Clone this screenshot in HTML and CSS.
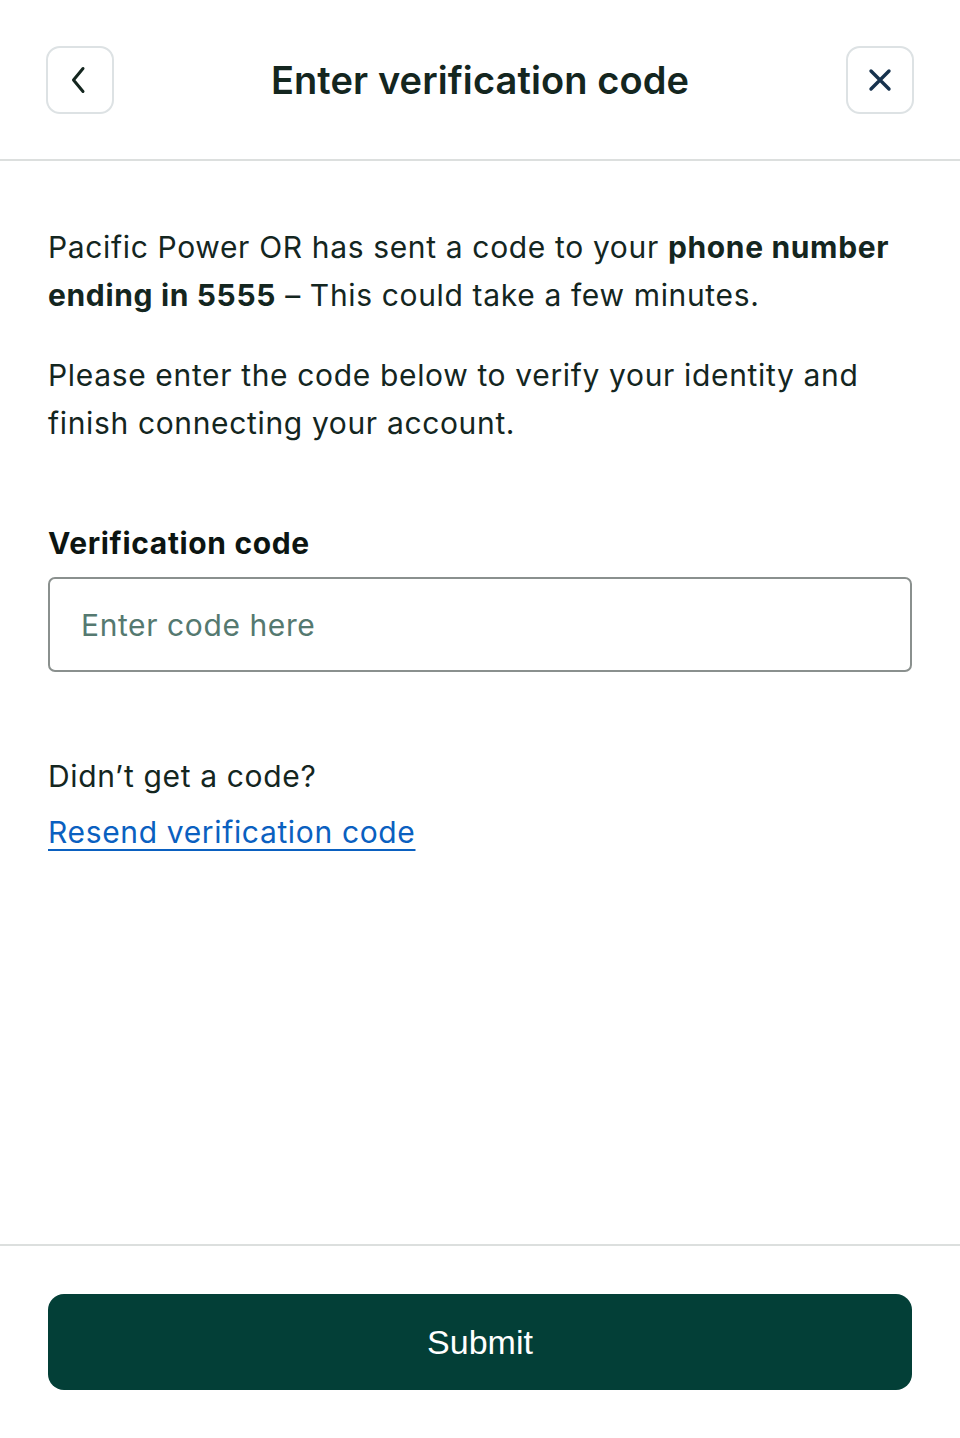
FILE: index.html
```html
<!DOCTYPE html>
<html lang="en">
<head>
  <meta charset="UTF-8">
  <meta name="viewport" content="width=device-width, initial-scale=1.0">
  <title>Enter verification code</title>
  <link rel="stylesheet" href="styles.css">
</head>
<body>
  <div class="screen">
    <header class="top-bar">
      <button class="icon-btn" aria-label="Back">
        <svg width="30" height="30" viewBox="0 0 30 30" fill="none" stroke="#14261f" stroke-width="3" stroke-linecap="round" stroke-linejoin="round"><path d="M18 3.5 L8.5 15 L18 26.5"/></svg>
      </button>
      <h1>Enter verification code</h1>
      <button class="icon-btn" aria-label="Close">
        <svg width="24" height="24" viewBox="0 0 24 24" fill="none" stroke="#17324d" stroke-width="3.4" stroke-linecap="round"><path d="M3 3 L21 21 M21 3 L3 21"/></svg>
      </button>
    </header>

    <main class="content">
      <p>Pacific Power OR has sent a code to your <strong>phone number ending in 5555</strong> &ndash; This could take a few minutes.</p>
      <p>Please enter the code below to verify your identity and finish connecting your account.</p>

      <label class="field-label" for="code">Verification code</label>
      <input id="code" class="code-input" type="text" placeholder="Enter code here">

      <div class="resend">
        <div>Didn&rsquo;t get a code?</div>
        <a href="#">Resend verification code</a>
      </div>
    </main>

    <footer class="bottom-bar">
      <button class="submit">Submit</button>
    </footer>
  </div>
</body>
</html>
```

FILE: styles.css
```css
body {
  margin: 0;
  background: #fff;
  color: #14261f;
  font-family: Inter, "Noto Sans", sans-serif;
}
.screen {
  display: flex;
  flex-direction: column;
  height: 1438px;
}
.top-bar {
  display: flex;
  align-items: center;
  justify-content: space-between;
  padding: 46px 46px 45px 46px;
  border-bottom: 2px solid #dcdfde;
}
.top-bar h1 {
  margin: 0;
  font-size: 38px;
  font-weight: 600;
  letter-spacing: 0.1px;
  color: #14261f;
}
.icon-btn {
  width: 68px;
  height: 68px;
  border: 2px solid #dde2e4;
  border-radius: 14px;
  background: #fff;
  display: flex;
  align-items: center;
  justify-content: center;
  padding: 0;
}
.content {
  flex: 1;
  padding: 62px 48px 0;
  font-size: 30px;
  letter-spacing: 0.65px;
  line-height: 48px;
}
.content p {
  margin: 0 0 32px;
}
.content strong {
  font-weight: 700;
}
.field-label {
  display: block;
  margin-top: 76px;
  font-weight: 700;
  color: #0c1512;
  line-height: 40px;
  margin-bottom: 14px;
}
.code-input {
  display: block;
  box-sizing: border-box;
  width: 100%;
  height: 95px;
  border: 2px solid #8a908e;
  border-radius: 7px;
  padding: 0 31px;
  font-family: inherit;
  font-size: 30px;
  letter-spacing: 0.6px;
  color: #14261f;
}
.code-input::placeholder {
  color: #557970;
}
.resend {
  margin-top: 76px;
  line-height: 56px;
}
.resend a {
  color: #0a60c0;
  text-decoration: underline;
  text-underline-offset: 6px;
  text-decoration-thickness: 2px;
}
.bottom-bar {
  border-top: 2px solid #dcdfde;
  padding: 48px 48px 48px;
}
.submit {
  display: block;
  width: 100%;
  height: 96px;
  border: none;
  border-radius: 16px;
  background: #033f37;
  color: #fff;
  font-family: "Liberation Sans", Inter, sans-serif;
  font-size: 34px;
  font-weight: 500;
}
```
